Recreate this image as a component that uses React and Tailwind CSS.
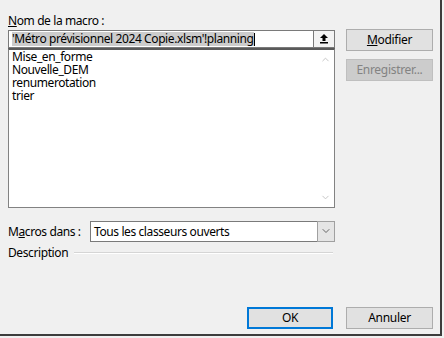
import { ChevronUp, ChevronDown } from 'lucide-react'

const FONT = { fontFamily: '"Noto Sans", "Segoe UI", sans-serif' }

const Btn = ({ children, disabled, primary, className = '' }) => (
  <div
    className={`h-[22px] flex items-center justify-center text-[12px] tracking-[-0.3px] border ${
      primary
        ? 'border-2 border-[#0078d7] bg-[#e1e1e1] text-black'
        : disabled
          ? 'border-[#bfbfbf] bg-[#cccccc] text-[#838383]'
          : 'border-[#adadad] bg-[#e1e1e1] text-black'
    } ${className}`}
  >
    {children}
  </div>
)

const MACROS = ['Mise_en_forme', 'Nouvelle_DEM', 'renumerotation', 'trier']

export default function App() {
  return (
    <div style={FONT} className="w-[444px] h-[338px] bg-[#f0f0f0] overflow-hidden text-black tracking-[-0.4px]">
      <div className="w-[442px] h-[336px] border-r-2 border-b-2 border-[#3c3c3c] flex flex-col pl-2 pt-[12px]">
        <div className="flex gap-[11px]">
          {/* left column */}
          <div className="w-[327px] flex flex-col">
            <div className="h-[18px] leading-[17px] text-[12px]">
              <span className="underline">N</span>om de la macro :
            </div>
            <div className="h-[18px] border border-[#7a7a7a] bg-white flex items-center">
              <div className="flex-1 flex items-center pl-[3px] text-[12px] leading-[14px]">
                <span className="bg-[#cccccc]">'Métro prévisionnel 2024 Copie.xlsm'!planning</span>
                <span className="w-px h-[13px] bg-black" />
              </div>
              <div className="w-[22px] h-[18px] -mt-px -mr-px border border-[#7a7a7a] bg-[#f3f3f3] flex items-center justify-center">
                <svg width="10" height="11" viewBox="0 0 10 11">
                  <path d="M5 1 L1 5 H3.5 V8 H6.5 V5 H9 Z" fill="black" />
                  <rect x="1" y="9" width="8" height="1.5" fill="black" />
                </svg>
              </div>
            </div>
            <div className="h-[160px] border border-[#828282] border-t-2 border-t-[#5a5a5a] bg-white flex">
              <div className="flex-1 pl-[3px] text-[12px] leading-[13px]">
                {MACROS.map(m => (
                  <div key={m} className="h-[13px]">{m}</div>
                ))}
              </div>
              <div className="w-[17px] flex flex-col justify-between items-center py-[4px] text-[#c2c2c2]">
                <ChevronUp size={11} strokeWidth={2} />
                <ChevronDown size={11} strokeWidth={2} />
              </div>
            </div>

            <div className="mt-[13px] flex items-center h-[21px]">
              <div className="w-[82px] text-[12px]">
                M<span className="underline">a</span>cros dans :
              </div>
              <div className="flex-1 h-[21px] border border-[#7a7a7a] bg-white flex items-center">
                <div className="flex-1 pl-[3px] text-[12px]">Tous les classeurs ouverts</div>
                <div className="w-[18px] h-[21px] -mt-px -mr-px border border-[#a0a0a0] bg-[#e5e5e5] flex items-center justify-center text-[#444]">
                  <ChevronDown size={12} strokeWidth={1.6} />
                </div>
              </div>
            </div>

            <div className="mt-[3px] flex items-center h-[16px] text-[12px]">
              <span>Description</span>
              <div className="flex-1 ml-[6px] mr-[2px] flex flex-col">
                <div className="h-px bg-[#d5d5d5]" />
                <div className="h-px bg-white" />
              </div>
            </div>
          </div>

          {/* right column */}
          <div className="w-[87px] pt-[17px] flex flex-col gap-[8px]">
            <Btn>
              <span className="underline">M</span>odifier
            </Btn>
            <Btn disabled>Enregistrer...</Btn>
          </div>
        </div>

        <div className="mt-auto mb-[5px] flex justify-end gap-[13px] pr-[7px]">
          <Btn primary className="w-[86px]">OK</Btn>
          <Btn className="w-[87px]">Annuler</Btn>
        </div>
      </div>
    </div>
  )
}
